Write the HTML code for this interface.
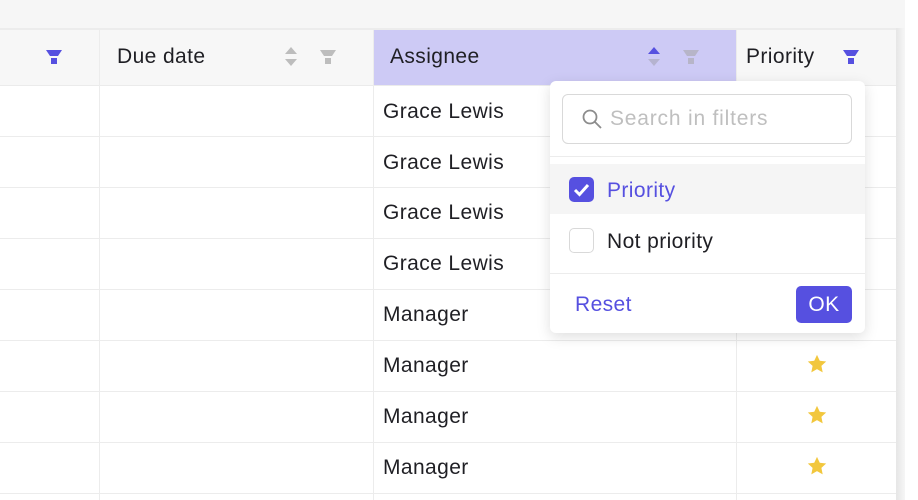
<!DOCTYPE html><html><head><style>
body{margin:0;width:918px;height:500px;overflow:hidden;background:#fff;font-family:"Liberation Sans",sans-serif;position:relative}
.a{position:absolute}
div{letter-spacing:0.4px}
.t{font-size:21px;color:#1f1f24}
</style></head><body>
<div class="a" style="left:0;top:0;width:905px;height:28px;background:#f6f6f6;border-bottom:2px solid #ececec"></div>
<div class="a" style="left:0;top:30px;width:896px;height:55px;background:#f7f7f7;border-bottom:1px solid #ebebeb"></div>
<div class="a" style="left:374px;top:30px;width:362px;height:55px;background:#cdcaf5"></div>
<div class="a" style="left:0;top:136px;width:896px;height:1px;background:#ececec"></div>
<div class="a" style="left:0;top:187px;width:896px;height:1px;background:#ececec"></div>
<div class="a" style="left:0;top:238px;width:896px;height:1px;background:#ececec"></div>
<div class="a" style="left:0;top:289px;width:896px;height:1px;background:#ececec"></div>
<div class="a" style="left:0;top:340px;width:896px;height:1px;background:#ececec"></div>
<div class="a" style="left:0;top:391px;width:896px;height:1px;background:#ececec"></div>
<div class="a" style="left:0;top:442px;width:896px;height:1px;background:#ececec"></div>
<div class="a" style="left:0;top:493px;width:896px;height:1px;background:#ececec"></div>
<div class="a" style="left:99px;top:30px;width:1px;height:470px;background:#ececec"></div>
<div class="a" style="left:373px;top:30px;width:1px;height:470px;background:#ececec"></div>
<div class="a" style="left:736px;top:30px;width:1px;height:470px;background:#ececec"></div>
<div class="a" style="left:896px;top:28px;width:9px;height:472px;background:linear-gradient(90deg,#e6e6e6,#f6f6f6)"></div>
<svg class="a" style="left:45px;top:48px" width="18" height="18" viewBox="0 0 18 18"><path d="M1 2h16l-4 6h-8z" fill="#5650e0"/><path d="M6 10h6v6h-6z" fill="#5650e0"/></svg>
<div class="a t" style="left:117px;top:45px">Due date</div>
<svg class="a" style="left:283px;top:46px" width="16" height="22"><path d="M2 8l6-7 6 7z M2 13l6 7 6-7z" fill="#bdbdbd"/></svg>
<svg class="a" style="left:319px;top:48px" width="18" height="18"><path d="M1 2h16l-4 6h-8z M6 10h6v6h-6z" fill="#bdbdbd"/></svg>
<div class="a t" style="left:390px;top:45px">Assignee</div>
<svg class="a" style="left:646px;top:46px" width="16" height="22"><path d="M2 8l6-7 6 7z" fill="#5650e0"/><path d="M2 13l6 7 6-7z" fill="#b5b3cf"/></svg>
<svg class="a" style="left:682px;top:48px" width="18" height="18"><path d="M1 2h16l-4 6h-8z M6 10h6v6h-6z" fill="#b7b5c8"/></svg>
<div class="a t" style="left:746px;top:45px">Priority</div>
<svg class="a" style="left:842px;top:48px" width="18" height="18"><path d="M1 2h16l-4 6h-8z M6 10h6v6h-6z" fill="#5650e0"/></svg>
<div class="a t" style="left:383px;top:100px">Grace Lewis</div>
<div class="a t" style="left:383px;top:151px">Grace Lewis</div>
<div class="a t" style="left:383px;top:201px">Grace Lewis</div>
<div class="a t" style="left:383px;top:252px">Grace Lewis</div>
<div class="a t" style="left:383px;top:303px">Manager</div>
<div class="a t" style="left:383px;top:354px">Manager</div>
<div class="a t" style="left:383px;top:405px">Manager</div>
<div class="a t" style="left:383px;top:456px">Manager</div>
<svg class="a" style="left:806px;top:353px" width="22" height="22" viewBox="0 0 24 24"><path d="M12 2l3 6.5 7 .8-5.2 4.8 1.4 7L12 17.6 5.8 21.1l1.4-7L2 9.3l7-.8z" fill="#f2c73d"/></svg>
<svg class="a" style="left:806px;top:404px" width="22" height="22" viewBox="0 0 24 24"><path d="M12 2l3 6.5 7 .8-5.2 4.8 1.4 7L12 17.6 5.8 21.1l1.4-7L2 9.3l7-.8z" fill="#f2c73d"/></svg>
<svg class="a" style="left:806px;top:455px" width="22" height="22" viewBox="0 0 24 24"><path d="M12 2l3 6.5 7 .8-5.2 4.8 1.4 7L12 17.6 5.8 21.1l1.4-7L2 9.3l7-.8z" fill="#f2c73d"/></svg>
<div class="a" style="left:550px;top:81px;width:315px;height:252px;background:#fff;border-radius:6px;box-shadow:0 4px 14px rgba(0,0,0,.13)">
 <div class="a" style="left:12px;top:13px;width:290px;height:50px;border:1px solid #d9d9d9;border-radius:6px;box-sizing:border-box"></div>
 <svg class="a" style="left:31px;top:27px" width="22" height="22"><circle cx="9" cy="9" r="6.5" stroke="#8c8c8c" stroke-width="1.8" fill="none"/><path d="M14 14l6 6" stroke="#8c8c8c" stroke-width="1.8"/></svg>
 <div class="a" style="left:60px;top:26px;font-size:21px;color:#bfbfbf;letter-spacing:0.8px">Search in filters</div>
 <div class="a" style="left:0;top:75px;width:315px;height:1px;background:#ececec"></div>
 <div class="a" style="left:0;top:83px;width:315px;height:50px;background:#f5f5f5"></div>
 <div class="a" style="left:19px;top:96px;width:25px;height:25px;background:#5650e0;border-radius:5px"></div>
 <svg class="a" style="left:19px;top:96px" width="25" height="25"><path d="M6 13l4.5 4.5L19 8" stroke="#fff" stroke-width="3" fill="none"/></svg>
 <div class="a" style="left:57px;top:98px;font-size:21px;color:#5650e0">Priority</div>
 <div class="a" style="left:19px;top:147px;width:25px;height:25px;border:1px solid #d9d9d9;border-radius:5px;box-sizing:border-box"></div>
 <div class="a" style="left:57px;top:149px;font-size:21px;color:#1f1f24">Not priority</div>
 <div class="a" style="left:0;top:192px;width:315px;height:1px;background:#ececec"></div>
 <div class="a" style="left:25px;top:212px;font-size:21px;color:#5650e0">Reset</div>
 <div class="a" style="left:246px;top:205px;width:56px;height:37px;background:#5650e0;border-radius:5px;color:#fff;font-size:21px;text-align:center;line-height:37px">OK</div>
</div>
</body></html>
